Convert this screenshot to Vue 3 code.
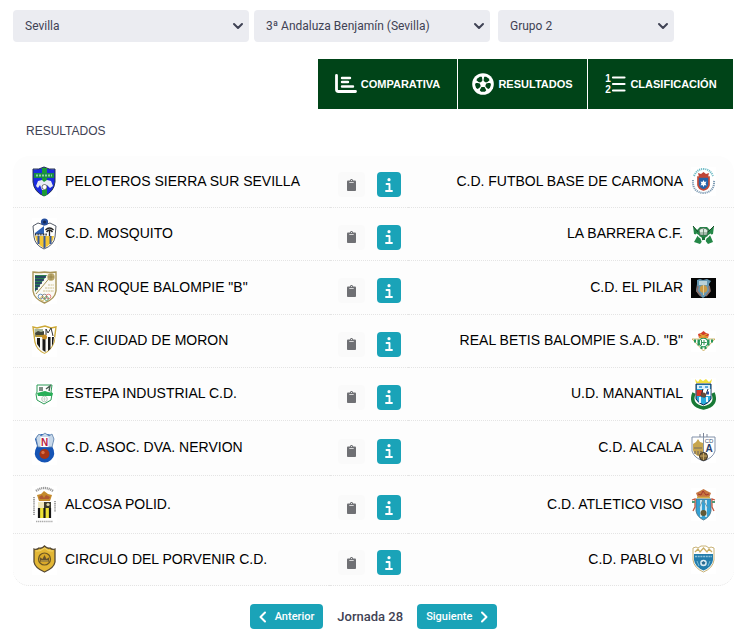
<script setup>
import {ref, computed} from "vue";

const province = ref("Sevilla");
const competition = ref("3ª Andaluza Benjamín (Sevilla)");
const group = ref("Grupo 2");
const round = ref(28);
const roundLabel = computed(() => `Jornada ${round.value}`);

// h: crest height, every crest is 25 wide
const matches = [
  {home: {name: "PELOTEROS SIERRA SUR SEVILLA", crest: "peloteros", h: 31}, away: {name: "C.D. FUTBOL BASE DE CARMONA", crest: "carmona", h: 29}},
  {home: {name: "C.D. MOSQUITO", crest: "mosquito", h: 32}, away: {name: "LA BARRERA C.F.", crest: "barrera", h: 25}},
  {home: {name: "SAN ROQUE BALOMPIE \"B\"", crest: "sanroque", h: 33}, away: {name: "C.D. EL PILAR", crest: "pilar", h: 20}},
  {home: {name: "C.F. CIUDAD DE MORON", crest: "moron", h: 32}, away: {name: "REAL BETIS BALOMPIE S.A.D. \"B\"", crest: "betis", h: 21}},
  {home: {name: "ESTEPA INDUSTRIAL C.D.", crest: "estepa", h: 25}, away: {name: "U.D. MANANTIAL", crest: "manantial", h: 32}},
  {home: {name: "C.D. ASOC. DVA. NERVION", crest: "nervion", h: 34}, away: {name: "C.D. ALCALA", crest: "alcala", h: 30}},
  {home: {name: "ALCOSA POLID.", crest: "alcosa", h: 37}, away: {name: "C.D. ATLETICO VISO", crest: "viso", h: 33}},
  {home: {name: "CIRCULO DEL PORVENIR C.D.", crest: "porvenir", h: 31}, away: {name: "C.D. PABLO VI", crest: "pablo", h: 29}}
];
</script>

<template>
  <svg class="sprite" aria-hidden="true">
    <symbol id="peloteros" viewBox="0 0 25 31">
      <path d="M1 3Q7 4 12 1Q17 4 23 3V16Q22 26 12 30Q2 26 1 16Z" fill="#1a2be0" stroke="#26344f"/>
      <path d="M10 2h5v27l-3 1-2-1z" fill="#1c9a35"/>
      <path d="M2 7h20v5H2z" fill="#178c46"/>
      <path d="M4 9.500h16" stroke="#8fd3a0" stroke-width="2" stroke-dasharray="2 1"/>
      <path d="M4 20l2-5 4-1 2 2 3-2 4 1 2 5-3 2-3-3-2 5h-3l-2-5-2 3z" fill="#e8ebf5"/>
      <circle cx="12.500" cy="21" r="2.500" fill="#fff" stroke="#444" stroke-width=".7"/>
    </symbol>
    <symbol id="mosquito" viewBox="0 0 25 32">
      <path d="M1 8l5-3 6 2 6-2 6 3-1 11q-1 8-11 12Q3 27 2 19Z" fill="#fff" stroke="#555c69"/>
      <path d="M3 15l9-7v8H3z" fill="#2f62b5"/>
      <path d="M3 18h19q-1 8-10 12Q4 26 3 18z" fill="#f3c432"/>
      <path d="M6.500 18v8M12.500 18v12M18.500 18v8" stroke="#36599c" stroke-width="2"/>
      <path d="M3 16.500h12" stroke="#333" stroke-width="2" stroke-dasharray="1 .6"/>
      <path d="M17.500 18v-6m-4 0q4-4 8 0m-7 2q3-4 6 0" stroke="#222" stroke-width="1.300" fill="none"/>
      <circle cx="12.500" cy="4" r="3.600" fill="#244d9c"/><circle cx="12.500" cy="4" r="1.500" fill="#142650"/>
    </symbol>
    <symbol id="sanroque" viewBox="0 0 25 33">
      <path d="M1 1q6 1 11.500 0Q18 2 24 1v19q-1 8-11.500 12Q2 28 1 20Z" fill="#fbfaf4" stroke="#a89558" stroke-width="1.400"/>
      <path d="M3 4h12L3 21z" fill="#2c8052"/>
      <path d="M3 6h11M3 9h9M3 12h7M3 15h5M3 18h3" stroke="#283669" stroke-width="1.500"/>
      <path d="M4 23L20 4" stroke="#a89558"/>
      <circle cx="19" cy="6" r="3.700" fill="#b8a568"/><path d="M16 6h6M19 3v6" stroke="#8a7840" stroke-width=".6"/>
      <path d="M16 14h6M13 17h9M11 20h11" stroke="#cfc08d" stroke-width="1.200" stroke-dasharray="2 .6"/>
      <g fill="none" stroke-width=".8"><circle cx="8.500" cy="25.500" r="2.300" stroke="#467bb5"/><circle cx="12.500" cy="25.500" r="2.300" stroke="#777"/><circle cx="16.500" cy="25.500" r="2.300" stroke="#d66"/><circle cx="10.500" cy="27.500" r="2" stroke="#d3ad45"/><circle cx="14.500" cy="27.500" r="2" stroke="#519b6a"/></g>
    </symbol>
    <symbol id="moron" viewBox="0 0 25 32">
      <path d="M1 2l4 1 8-2 6 2 5-1-2 15q-3 8-9.500 11Q5 25 3 17Z" fill="#fff" stroke="#cda937" stroke-width="1.400"/>
      <path d="M3 12h20l-2 7q-3 6-8.500 9Q6 25 4 19z" fill="#f7f7f3"/>
      <path d="M5 13h3v10l-3-4zM10.500 14h3v13l-3-2zM16 12h2.500v12L16 26zM20 12h2l-1 7-1 2z" fill="#171717"/>
      <path d="M2.500 4L11 4v8H3z" fill="#a9b79b"/><path d="M3 8l3-2 3 1 3-1v6H4z" fill="#43473b"/><path d="M4 11h8" stroke="#d5ab31" stroke-width="1.500"/>
      <path d="M14 10V4l2 4 3-5 2 8" fill="none" stroke="#333"/>
      <circle cx="12.500" cy="12" r="2.500" fill="#c68e27"/>
    </symbol>
    <symbol id="estepa" viewBox="0 0 25 25">
      <path d="M5 3h15l-1 7 1 2-1 6-7 4-7-4-1-6 1-2z" fill="#fff" stroke="#2f9d58"/>
      <path d="M5 11l4-1 4-1 3 1 5 1-1 3H6z" fill="#29af58"/>
      <path d="M8 9V5M10 9V5M14 7l4-3-1 5" stroke="#475e50" stroke-width="1.400" fill="none"/>
      <circle cx="12.500" cy="17" r="2.800" fill="#fff" stroke="#98b8a2" stroke-width=".7"/>
      <path d="M10.500 17h4M12.500 15v4" stroke="#b5c5b8" stroke-width=".6"/>
    </symbol>
    <symbol id="nervion" viewBox="0 0 25 34">
      <path d="M6 4l4-1h5l5 1 2 4-2 7q5 9-1 14-6 5-13 0-6-5-1-14L3 8z" fill="#1554b5"/>
      <path d="M4 7l3-4 2 2 4-3 4 3 3-2 2 5-2 8H6z" fill="#c7d8ea" stroke="#6486ad" stroke-width=".8"/>
      <path d="M8.500 6h8v10h-8z" fill="#fff"/>
      <text x="12.500" y="14.500" text-anchor="middle" font-size="10" font-weight="700" fill="#b91f45">N</text>
      <circle cx="12.500" cy="23" r="5" fill="#a83514"/><circle cx="11" cy="21.500" r="1.700" fill="#db7045"/>
    </symbol>
    <symbol id="alcosa" viewBox="0 0 25 37">
      <path d="M4 5Q12-1 21 5" fill="none" stroke="#999" stroke-width="2.400" stroke-dasharray="1.200 .7"/>
      <path d="M2 11v18M23 15v11" stroke="#999" stroke-width="1.800" stroke-dasharray="1.300 .8"/>
      <path d="M4 35.500h17" stroke="#aaa" stroke-width="1.700" stroke-dasharray="1.300 .6"/>
      <path d="M7 15L5 9l4-1 3-3 4 3 4 1-2 6z" fill="#c48a2d"/><path d="M7 11l3-2 2 3 2-3 4 2-1 2H8z" fill="#ae5a34"/>
      <path d="M6 16h13v6H6z" fill="#eee6bd"/><path d="M12 16h7v6h-7z" fill="#3a3a30"/><circle cx="16" cy="18.500" r="1.600" fill="#ded6a8"/>
      <path d="M6 22h13v10H6z" fill="#ece035"/>
      <path d="M7 22v10M12.500 22v10M18 22v10" stroke="#161616" stroke-width="2.200"/>
    </symbol>
    <symbol id="porvenir" viewBox="0 0 25 31">
      <path d="M2 5q3 1 5-1 3 1 5.500-2 3 3 5.500 2 2 2 5 1v13q-1 6-10.500 10Q3 24 2 18z" fill="#e3b735" stroke="#554832" stroke-width="1.300"/>
      <path d="M4 7q4 1 8.500-3 4 4 8.500 3" fill="none" stroke="#f4d76c"/>
      <circle cx="12.500" cy="15" r="6" fill="#d9a929" stroke="#6c5724" stroke-width="1.200"/>
      <path d="M8.500 18l-1-5 3 2 2-4 2 4 3-2-1 5z" fill="#66522b"/><path d="M9 17h7" stroke="#e7c251"/>
    </symbol>
    <symbol id="carmona" viewBox="0 0 25 29">
      <path d="M3 9Q6 2 12.500 2T22 9" fill="none" stroke="#6fbcc6" stroke-width="2" stroke-dasharray="1.200 .8"/>
      <path d="M2 13q-1 12 10.500 13Q24 25 23 13" fill="none" stroke="#7d9ab3" stroke-width="2" stroke-dasharray="1.200 .8"/>
      <path d="M8 10L7 6l3 1 2.500-2L15 7l3-1-1 4z" fill="#bf4437"/>
      <path d="M7 10h11v8q-1 4-5.500 5Q8 22 7 18z" fill="#2563ab" stroke="#c44936" stroke-width="1.700"/>
      <path d="M12.500 13l1 2 2-.500-1 2 1 2-2-.500-1 2-1-2-2 .500 1-2-1-2 2 .500z" fill="#fff"/>
    </symbol>
    <symbol id="barrera" viewBox="0 0 25 25">
      <path d="M2 4l4 4 3-3h7l3 3 4-4-1 8-3 1 3 7-5 2-4-5-4 5-6-2 4-7-4-1z" fill="#258848"/>
      <path d="M2 4l5 6M23 4l-6 6" stroke="#154c28"/>
      <path d="M8 8q4-4 9 0l-1 5H9z" fill="#dcebe0" stroke="#435f4c" stroke-width=".8"/>
      <path d="M9 11h7M12.500 7v6" stroke="#5c7d66" stroke-width=".8"/>
      <path d="M7 14l3 2 2 5M18 14l-3 2-2 5M5 12l3 2M20 12l-3 2" stroke="#fff" stroke-width="1.500" fill="none"/>
      <path d="M11 15h3v3h-3z" fill="#1d743b"/>
    </symbol>
    <symbol id="pilar" viewBox="0 0 25 20">
      <path d="M0 0h25v20H0z" fill="#050505"/>
      <path d="M6 2l3-1 3 1 4-1 4 2-2 3 1 7-4 5-3 2-4-3-3-4 1-7z" fill="#6597b1"/>
      <path d="M8 3h8v4H8z" fill="#b9d2d9"/>
      <path d="M7 8l-1 5 4 5M18 8l1 5-4 5" stroke="#8e6f67" stroke-width="1.600" fill="none"/>
      <circle cx="12.500" cy="11" r="3.800" fill="#c99a44"/><path d="M12.500 7v10" stroke="#e4c98c"/>
    </symbol>
    <symbol id="betis" viewBox="0 0 25 21">
      <path d="M1 8h23L12.500 20z" fill="#f9faf4" stroke="#c6a64e" stroke-width=".8"/>
      <path d="M4 8.500v3M7.500 8.500v6M17.500 8.500v6M21 8.500v3M10.500 16v2M14.500 16v2" stroke="#259657" stroke-width="2"/>
      <circle cx="12.500" cy="11.500" r="4.300" fill="#fff" stroke="#259657" stroke-width="1.200"/>
      <path d="M10.500 9v5M13 9v5M10.500 11.500h5" stroke="#37945b"/>
      <path d="M8 7L7 3l3-1 2.500-2L15 2l3 1-1 4z" fill="#d33f2c"/><path d="M8 6h9M9 3l3 2 4-2" stroke="#dfaa35" stroke-width="1.300" fill="none"/>
    </symbol>
    <symbol id="manantial" viewBox="0 0 25 32">
      <path d="M4 1l3 3 2-3 3 2 3-2 3 3 3-3-1 4H5z" fill="#f1df38"/>
      <path d="M3 15q-5 12 9.500 15Q27 27 22 15" fill="none" stroke="#187a36" stroke-width="3.500"/>
      <path d="M5 6h15v15q-2 4-7.500 6Q7 25 5 21z" fill="#27aadd" stroke="#17284d"/>
      <path d="M6 7h13v4H6z" fill="#dceefa"/><path d="M8 9h3M14 9h3" stroke="#2f8fcf" stroke-width="1.500"/>
      <path d="M5.500 12h7v6h-7z" fill="#d63829"/>
      <path d="M12 11h7.500v7H12z" fill="#fff"/><path d="M12 11l-2 7 4 1 3-8" fill="none" stroke="#23293c"/>
      <path d="M9 19v6M16 19v5" stroke="#fff" stroke-width="1.800"/>
      <circle cx="12.500" cy="17" r="2.500" fill="#684b39"/><path d="M16 15h2" stroke="#234ca4" stroke-width="3"/>
    </symbol>
    <symbol id="alcala" viewBox="0 0 25 30">
      <path d="M1 4h23v14q-2 7-11.500 10Q3 25 1 18z" fill="#fff" stroke="#8190a8"/>
      <path d="M9 4V1M12.500 4V0M16 4V1" stroke="#7c8497"/>
      <path d="M12.500 4v20" stroke="#8896a9"/>
      <path d="M2 17V11l3-2 2-3 2 3 3 1v14l-5-1q-4-2-5-6z" fill="#c7a54e"/>
      <path d="M3 15h8M4 18v3M7 18v4M10 18v3" stroke="#756c62" stroke-width="1.200"/>
      <text x="18" y="10" text-anchor="middle" font-size="6" fill="#405070">CD</text>
      <text x="18" y="19" text-anchor="middle" font-size="10" font-weight="700" fill="#263e6e">A</text>
      <circle cx="12.500" cy="23.500" r="4" fill="#806736" stroke="#352f28"/><path d="M9 23h7M12.500 20v7" stroke="#c6a766"/>
    </symbol>
    <symbol id="viso" viewBox="0 0 25 33">
      <path d="M7 10L5 5l4-2 3.500-2L16 3l4 2-2 5z" fill="#c57640"/><path d="M7 6l3 1 2-4 3 4 3-1" stroke="#a43630" fill="none"/><path d="M6 9.500h13" stroke="#d5ae45" stroke-width="1.500"/>
      <path d="M5 11h15v12q-1 6-7.500 9Q6 29 5 23z" fill="#36a1d4" stroke="#476c7d" stroke-width=".8"/>
      <path d="M10 12v17M15 12v17" stroke="#e4f2f7" stroke-width="1.700"/>
      <path d="M8 20l4-8 5 8" fill="none" stroke="#6f96a5"/>
      <circle cx="12.500" cy="25" r="3" fill="#635936"/>
      <path d="M1 12l3-1v8l-2 4M24 12l-3-1v8l2 4" stroke="#c3573f" stroke-width="1.300" fill="none"/><path d="M1 14h3M21 14h3" stroke="#4f9977" stroke-width="2"/>
    </symbol>
    <symbol id="pablo" viewBox="0 0 25 29">
      <path d="M2 3l3-1 2 1 3-2h5l3 2 2-1 3 1v12q-1 8-10.500 12Q3 23 2 15z" fill="#fff" stroke="#c8b277"/>
      <path d="M4 7l3-3 2 3 3.500-4L16 7l2-3 3 3" fill="none" stroke="#c8ad63" stroke-width="1.300"/>
      <path d="M3 9h19v6q-1 7-9.500 10.500Q4 22 3 15z" fill="#237dac"/>
      <path d="M4 11.500h17" stroke="#8fc4dc" stroke-width="1.600" stroke-dasharray="2 .7"/>
      <circle cx="12.500" cy="18" r="3.300" fill="#dcecf3"/><path d="M12.500 16l2 1.500-1 2h-2l-1-2z" fill="#286b91"/>
      <path d="M6 16l2 5M19 16l-2 5" stroke="#78bad4"/>
    </symbol>
  </svg>

  <main class="page">
    <form class="filters" @submit.prevent>
      <div class="field">
        <select v-model="province" aria-label="Provincia">
          <option>Sevilla</option>
        </select>
        <svg viewBox="0 0 12 8"><path d="M2 2l4 4 4-4"/></svg>
      </div>
      <div class="field">
        <select v-model="competition" aria-label="Competición">
          <option>3ª Andaluza Benjamín (Sevilla)</option>
        </select>
        <svg viewBox="0 0 12 8"><path d="M2 2l4 4 4-4"/></svg>
      </div>
      <div class="field group">
        <select v-model="group" aria-label="Grupo">
          <option>Grupo 2</option>
        </select>
        <svg viewBox="0 0 12 8"><path d="M2 2l4 4 4-4"/></svg>
      </div>
    </form>

    <nav class="tabs">
      <button type="button">
        <svg viewBox="0 0 22 22" fill="none" stroke="#fff" stroke-linecap="round" stroke-linejoin="round">
          <path d="M1.500 2.500v14q0 2 2 2h17" stroke-width="2.800"/>
          <path d="M7 5h8M7 9h6M7 13.500h11" stroke-width="2.400"/>
        </svg>
        <span>COMPARATIVA</span>
      </button>
      <button type="button">
        <svg viewBox="0 0 22 22">
          <circle cx="11" cy="11" r="10.800" fill="#fff"/>
          <circle cx="11" cy="11" r="4.800" fill="#004418"/>
          <g fill="#004418">
            <path id="patch" d="M8.600 15h4.800l.8 2.600-1.400 1.200H9.200l-1.400-1.200z"/>
            <use href="#patch" transform="rotate(72 11 11)"/>
            <use href="#patch" transform="rotate(144 11 11)"/>
            <use href="#patch" transform="rotate(216 11 11)"/>
            <use href="#patch" transform="rotate(288 11 11)"/>
          </g>
          <path d="M11 7.600l3.300 2.400-1.300 3.900H9L7.700 10z" fill="#fff"/>
          <path d="M11 2v7M11 11L2.500 8.200M11 11l8.500-2.800M11 11l-5.300 7.300M11 11l5.300 7.300" stroke="#fff" stroke-width="1.200"/>
        </svg>
        <span>RESULTADOS</span>
      </button>
      <button type="button">
        <svg viewBox="0 0 22 22">
          <text x="4" y="9" text-anchor="middle" font-size="10" font-weight="700" fill="#fff">1</text>
          <text x="4" y="20" text-anchor="middle" font-size="10" font-weight="700" fill="#fff">2</text>
          <path d="M9 4.500h11.500M9 11h11.500M9 17.500h11.500" stroke="#fff" stroke-width="2.200" stroke-linecap="round"/>
        </svg>
        <span>CLASIFICACIÓN</span>
      </button>
    </nav>

    <h1>RESULTADOS</h1>

    <table>
      <tbody>
        <tr v-for="match in matches" :key="match.home.name">
          <td class="home">
            <div class="team">
              <svg class="crest" :viewBox="`0 0 25 ${match.home.h}`"><use :href="`#${match.home.crest}`"/></svg>
              <span>{{ match.home.name }}</span>
            </div>
          </td>
          <td class="actions">
            <div class="buttons">
              <button type="button" class="report" aria-label="Acta">
                <svg viewBox="0 0 384 512"><path fill="currentColor" d="M384 112v352c0 26.510-21.490 48-48 48H48c-26.510 0-48-21.490-48-48V112c0-26.510 21.490-48 48-48h80c0-35.290 28.710-64 64-64s64 28.710 64 64h80c26.510 0 48 21.490 48 48zM192 40c-13.255 0-24 10.745-24 24s10.745 24 24 24 24-10.745 24-24-10.745-24-24-24m96 114v-20a6 6 0 0 0-6-6H102a6 6 0 0 0-6 6v20a6 6 0 0 0 6 6h180a6 6 0 0 0 6-6z"/></svg>
              </button>
              <button type="button" class="info" aria-label="Información">
                <svg viewBox="0 0 8 14"><circle cx="4" cy="1.700" r="1.600" fill="currentColor"/><path d="M1.500 6h3v7M1 13h6" fill="none" stroke="currentColor" stroke-width="1.900" stroke-linecap="round" stroke-linejoin="round"/></svg>
              </button>
            </div>
          </td>
          <td class="away">
            <div class="team">
              <span>{{ match.away.name }}</span>
              <svg class="crest" :viewBox="`0 0 25 ${match.away.h}`"><use :href="`#${match.away.crest}`"/></svg>
            </div>
          </td>
        </tr>
      </tbody>
    </table>

    <div class="pager">
      <button type="button" @click="round--">
        <svg viewBox="0 0 8 12"><path d="M6 1.500L1.500 6 6 10.500"/></svg>
        Anterior
      </button>
      <strong>{{ roundLabel }}</strong>
      <button type="button" @click="round++">
        Siguiente
        <svg viewBox="0 0 8 12"><path d="M2 1.500L6.500 6 2 10.500"/></svg>
      </button>
    </div>
  </main>
</template>

<style>
body{margin: 0;background: #FFF}
</style>

<style scoped>
.sprite{display: none}
.page{padding: 10px 10px 8px 13px;font-family: "Liberation Sans", Arial, sans-serif;color: #3f4254}
button{border: 0;padding: 0;font-family: inherit;cursor: pointer}

.filters{display: flex;gap: 5px}
.field{position: relative;flex: 0 1 236px;min-width: 0}
.field.group{flex-basis: 176px;margin-left: 3px}
.field select{appearance: none;display: block;width: 100%;height: 32px;padding: 0 24px 0 12px;border: 0;border-radius: 4px;background: #ebecf1;color: #3f4254;font: 12px Roboto, sans-serif}
.field svg{position: absolute;right: 5px;top: 12px;width: 12px;height: 8px;fill: none;stroke: #3f4254;stroke-width: 2;stroke-linecap: round;stroke-linejoin: round;pointer-events: none}

.tabs{display: grid;grid-template-columns: 139fr 129fr 145fr;gap: 1px;max-width: 415px;margin: 17px 1px 0 auto}
.tabs button{display: flex;align-items: center;justify-content: center;gap: 4px;height: 50px;background: #004418;color: #FFF;font: bold 11px "Liberation Sans Narrow", "Liberation Sans", sans-serif}
.tabs svg{flex: none;width: 22px;height: 22px}
.tabs text{font-family: "Liberation Sans", Arial, sans-serif}

h1{margin: 10px 0 13px 13px;font: 12px/24px "Liberation Sans Narrow", "Liberation Sans", sans-serif}

table{width: 100%;table-layout: fixed;border-collapse: separate;border-spacing: 0;background: #fdfdfd;border-radius: 16px;color: #000;font-size: 14px}
td{padding: 10px 0;border-bottom: 1px dotted #e4e4e4;vertical-align: middle}
.home{width: 44%}
.actions{width: 78px;padding: 16px 0 10px}
.team{display: flex;align-items: center;gap: 8px;padding: 0 18px 0 19px;line-height: 16px}
.team span{padding-bottom: 2px}
.home .team{padding-right: 0}
.away .team{justify-content: flex-end;padding-left: 0}
.crest{flex: none;display: block;width: 25px;height: auto;background: #FFF}
.buttons{display: flex;justify-content: center;gap: 12px}
.buttons button{display: flex;align-items: center;justify-content: center;height: 25px;border-radius: 4px}
.report{width: 27px;background: #fafafa;color: #6f7074}
.report svg{height: 12px}
.info{width: 24px;background: #1aa3b8;color: #FFF}
.info svg{height: 14px}
tr:last-child td:first-child{border-bottom-left-radius: 16px}
tr:last-child td:last-child{border-bottom-right-radius: 16px}

.pager{display: flex;align-items: center;justify-content: center;gap: 14px;margin-top: 18px}
.pager button{display: flex;align-items: center;gap: 8px;height: 25px;padding: 0 9px;border-radius: 4px;background: #1aa3b8;color: #FFF;font: 500 11px Roboto, sans-serif}
.pager strong{font: 500 13px Roboto, sans-serif}
.pager svg{width: 8px;height: 12px;fill: none;stroke: #FFF;stroke-width: 2;stroke-linecap: round;stroke-linejoin: round}
</style>
